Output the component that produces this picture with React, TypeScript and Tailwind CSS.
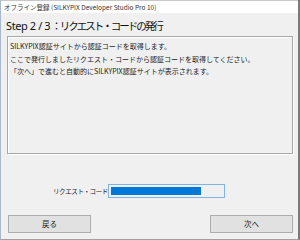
export default function App() {
  return (
    <div
      className="w-[300px] h-[240px] flex flex-col bg-[#f0f0f0] border-l border-l-[#a9b8cc] border-r-2 border-r-[#7a7a7a] border-b border-b-[#a0a0a0] overflow-hidden"
      style={{ fontFamily: '"Noto Sans CJK JP", "Noto Sans", sans-serif' }}
    >
      <div className="h-[13px] bg-white border-t border-t-[#c8c8c8] flex items-center pl-[3px] text-[6.5px] text-[#333] leading-none">
        オフライン登録 (SILKYPIX Developer Studio Pro 10)
      </div>
      <div className="pl-[5px] pt-[3px] h-[23px] flex items-baseline text-[#111] leading-[20px]">
        <span className="text-[11px] tracking-[-0.4px]" style={{ fontFamily: '"Noto Sans", sans-serif' }}>
          Step 2 / 3
        </span>
        <span className="text-[10.5px] tracking-[-2px] ml-[1px]">：リクエスト・コードの発行</span>
      </div>
      <div className="ml-[6px] mr-[5px] h-[118px] border border-[#a8a8a8] shadow-[inset_1px_1px_0_#ffffff,1px_1px_0_#ffffff] pt-[3px] pl-[2px] text-[7px] leading-[12.5px] text-[#222]">
        <div>SILKYPIX認証サイトから認証コードを取得します。</div>
        <div>ここで発行しましたリクエスト・コードから認証コードを取得してください。</div>
        <div>「次へ」で進むと自動的にSILKYPIX認証サイトが表示されます。</div>
      </div>
      <div className="flex items-center mt-[30px] pl-[52px] gap-[2px]">
        <div className="w-[53px] whitespace-nowrap text-right text-[6.5px] tracking-[-0.4px] text-[#222] leading-none">
          リクエスト・コード
        </div>
        <div className="w-[117px] h-[14px] border border-[#7eb4ea] bg-[#f0f0f0] p-[2px] flex">
          <div className="w-[90px] h-full bg-[#0078d7]" />
        </div>
      </div>
      <div className="flex justify-between mt-[17px] pl-[7px] pr-[5px]">
        <div className="w-[83px] h-[18px] bg-[#e1e1e1] border border-[#adadad] flex items-center justify-center text-[7.5px] text-[#222]">
          戻る
        </div>
        <div className="w-[83px] h-[18px] bg-[#e1e1e1] border border-[#adadad] flex items-center justify-center text-[7.5px] text-[#222]">
          次へ
        </div>
      </div>
    </div>
  );
}
